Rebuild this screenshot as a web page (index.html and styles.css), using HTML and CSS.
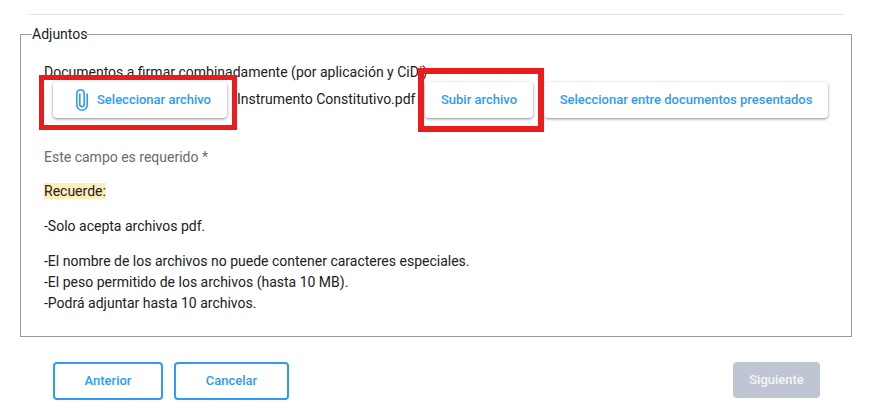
FILE: index.html
```html
<!DOCTYPE html>
<html lang="es">

<head>
  <meta charset="UTF-8">
  <title>Adjuntos</title>
  <link rel="stylesheet" href="styles.css">
</head>

<body>
  <hr class="divider">
  <fieldset class="adjuntos">
    <legend>Adjuntos</legend>
    <p class="doc-title">Documentos a firmar combinadamente (por aplicación y CiDi)</p>
    <div class="file-row">
      <button class="btn-raised btn-select">
        <svg class="clip" width="16" height="24" viewBox="0 0 16 24" fill="none" stroke="#2e9bf8" stroke-width="1.6" stroke-linecap="round">
          <path d="M13.2 6V17C13.2 20 10.8 22.2 8 22.2C5.2 22.2 2.8 20 2.8 17V5.5C2.8 3.4 4.4 1.8 6.5 1.8C8.6 1.8 10.2 3.4 10.2 5.5V16.5C10.2 17.8 9.2 18.6 8 18.6C6.8 18.6 5.8 17.8 5.8 16.5V6"/>
        </svg>
        Seleccionar archivo
      </button>
      <span class="file-name">Instrumento Constitutivo.pdf</span>
      <button class="btn-raised btn-upload">Subir archivo</button>
      <button class="btn-raised btn-docs">Seleccionar entre documentos presentados</button>
    </div>
    <p class="required">Este campo es requerido *</p>
    <p class="remember"><mark>Recuerde:</mark></p>
    <p class="rule">-Solo acepta archivos pdf.</p>
    <p class="rules">
      -El nombre de los archivos no puede contener caracteres especiales.<br>
      -El peso permitido de los archivos (hasta 10 MB).<br>
      -Podrá adjuntar hasta 10 archivos.
    </p>
  </fieldset>
  <div class="actions">
    <button class="btn-outline btn-prev">Anterior</button>
    <button class="btn-outline btn-cancel">Cancelar</button>
    <button class="btn-next" disabled>Siguiente</button>
  </div>
  <!-- marcas rojas sobre la captura -->
  <div class="mark-box mark-select"></div>
  <div class="mark-box mark-upload"></div>
</body>

</html>
```

FILE: styles.css
```css
body {
  margin: 0;
  padding: 14px 22px 0 20px;
  height: 400px;
  overflow: hidden;
  position: relative;
  background: #fff;
  color: #212121;
  font-family: Roboto, "Liberation Sans", sans-serif;
  font-size: 14px;
  line-height: 21px;
}

.divider {
  margin: 0 8px 0 9px;
  border: 0;
  border-top: 1px solid #e2e2e2;
}

.adjuntos {
  margin: 9px 0 0;
  padding: 0 23px 0 23px;
  height: 313px;
  box-sizing: border-box;
  border: 1px solid #9a9a9a;
  min-width: 0;
}

.adjuntos legend {
  margin-left: -12px;
  padding: 0;
  line-height: 20px;
}

.doc-title {
  margin: 18px 0 0;
  line-height: 20px;
}

.file-row {
  display: flex;
  align-items: center;
  margin-left: 9px;
}

button {
  font-family: Roboto, "Liberation Sans", sans-serif;
  font-size: 13px;
  font-weight: 500;
  color: #2e9bf8;
  background: #fff;
  cursor: pointer;
}

.btn-raised {
  height: 36px;
  border: 0;
  border-radius: 4px;
  box-shadow: 0 1px 3px rgba(0, 0, 0, .45);
  display: flex;
  align-items: center;
  justify-content: center;
  padding: 0 0 1px;
}

.btn-select {
  width: 174px;
  padding-left: 5px;
}

.clip {
  margin-right: 7px;
}

.file-name {
  margin-left: 10px;
  margin-bottom: 2px;
  width: 188px;
  white-space: nowrap;
}

.btn-upload {
  width: 108px;
}

.btn-docs {
  margin-left: 11px;
  width: 284px;
}

.required {
  margin: 29px 0 0;
  color: #6b6b6b;
}

.remember {
  margin: 13px 0 0;
}

.remember mark {
  background: #fdeeba;
  color: inherit;
}

.rule {
  margin: 14px 0 0;
}

.rules {
  margin: 14px 0 0;
}

.actions {
  display: flex;
  margin: 25px 32px 0 33px;
  gap: 11px;
}

.btn-outline {
  height: 38px;
  border: 2px solid #2e9bf8;
  border-radius: 4px;
  padding: 0 0 2px;
}

.btn-prev {
  width: 110px;
}

.btn-cancel {
  width: 115px;
}

.btn-next {
  margin-left: auto;
  width: 87px;
  height: 36px;
  border: 0;
  border-radius: 4px;
  background: #bfc5d2;
  color: #f4f5f7;
  padding: 0 0 2px;
}

.mark-box {
  position: absolute;
  box-sizing: border-box;
  border: 5px solid #ea1c1c;
}

.mark-select {
  left: 39px;
  top: 75px;
  width: 198px;
  height: 55px;
}

.mark-upload {
  left: 418px;
  top: 68px;
  width: 126px;
  height: 64px;
  border-width: 6px;
}
```
